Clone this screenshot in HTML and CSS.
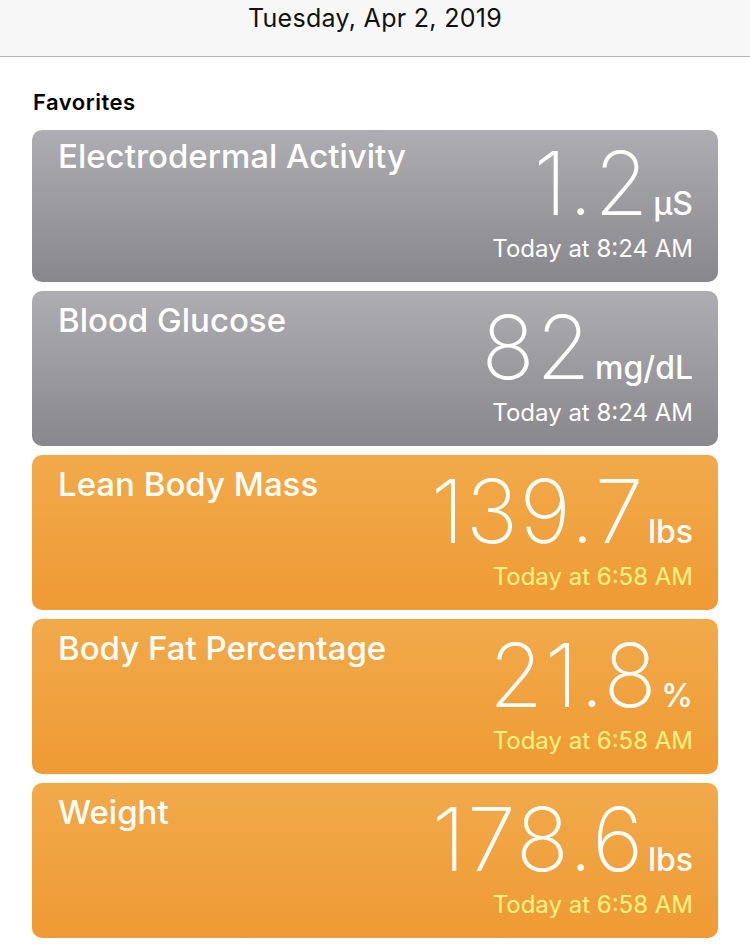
FILE: index.html
```html
<!DOCTYPE html>
<html>
<head>
<meta charset="utf-8">
<link rel="stylesheet" href="styles.css">
</head>
<body>
<header class="topbar">Tuesday, Apr 2, 2019</header>
<section class="favorites">
  <h2 class="section-title">Favorites</h2>
  <div class="cards">
    <div class="card gray first">
      <div class="card-title">Electrodermal Activity</div>
      <div class="reading">
        <div class="value"><span class="num">1.2</span><span class="unit">µS</span></div>
        <div class="time">Today at 8:24 AM</div>
      </div>
    </div>
    <div class="card gray">
      <div class="card-title">Blood Glucose</div>
      <div class="reading">
        <div class="value"><span class="num">82</span><span class="unit">mg/dL</span></div>
        <div class="time">Today at 8:24 AM</div>
      </div>
    </div>
    <div class="card orange">
      <div class="card-title">Lean Body Mass</div>
      <div class="reading">
        <div class="value"><span class="num">139.7</span><span class="unit">lbs</span></div>
        <div class="time">Today at 6:58 AM</div>
      </div>
    </div>
    <div class="card orange">
      <div class="card-title">Body Fat Percentage</div>
      <div class="reading">
        <div class="value"><span class="num">21.8</span><span class="unit">%</span></div>
        <div class="time">Today at 6:58 AM</div>
      </div>
    </div>
    <div class="card orange">
      <div class="card-title">Weight</div>
      <div class="reading">
        <div class="value"><span class="num">178.6</span><span class="unit">lbs</span></div>
        <div class="time">Today at 6:58 AM</div>
      </div>
    </div>
  </div>
</section>
</body>
</html>
```
FILE: styles.css
```css
html, body {
  margin: 0;
  padding: 0;
  background: #ffffff;
  font-family: Inter, Roboto, "Liberation Sans", sans-serif;
}

.topbar {
  height: 57px;
  box-sizing: border-box;
  background: #f7f7f7;
  border-bottom: 1px solid #b4b4b4;
  text-align: center;
  font-size: 25px;
  line-height: 25px;
  letter-spacing: 0.3px;
  padding-top: 6px;
  color: #111;
}

.favorites {
  padding: 0 32px;
}

.section-title {
  margin: 0;
  padding: 32px 1px 15px;
  font-size: 22px;
  line-height: 26px;
  font-weight: 600;
  letter-spacing: 0.5px;
  color: #000;
}

.cards {
  display: flex;
  flex-direction: column;
  gap: 9px;
}

.card {
  height: 155px;
  box-sizing: border-box;
  border-radius: 10px;
  padding: 11px 25px 0 26px;
  display: flex;
  justify-content: space-between;
  color: #fff;
}

.card.first {
  height: 152px;
  padding-top: 8px;
}

.gray {
  background: linear-gradient(to bottom, #aeadb2, #88878c);
}

.orange {
  background: linear-gradient(to bottom, #f1aa4a, #ef9a35);
}

.card-title {
  font-size: 33px;
  line-height: 36px;
  font-weight: 500;
  white-space: nowrap;
}

.reading {
  display: flex;
  flex-direction: column;
  align-items: flex-end;
}

.value {
  display: flex;
  align-items: baseline;
  margin-top: 7px;
}

.num {
  font-size: 88px;
  line-height: 76px;
  font-weight: 200;
  letter-spacing: 1.5px;
}

.unit {
  font-size: 32px;
  line-height: 30px;
  font-weight: 500;
  margin-left: 3px;
}

.time {
  font-size: 24px;
  line-height: 28px;
  margin-top: 14px;
}

.orange .time {
  color: #fff57e;
}
```
